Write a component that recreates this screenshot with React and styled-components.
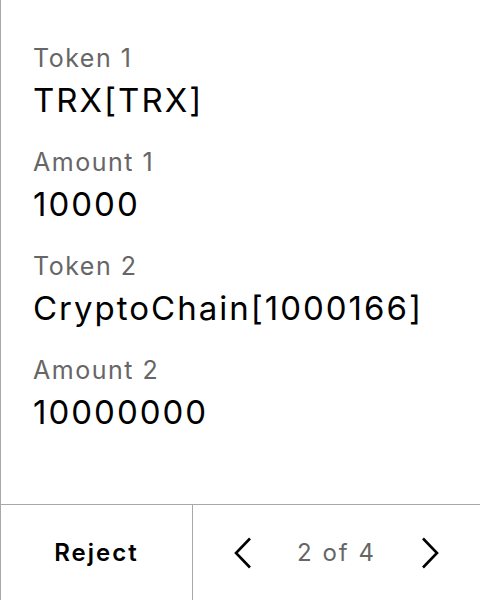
import React from 'react';
import styled, { createGlobalStyle } from 'styled-components';

const Global = createGlobalStyle`
  body {
    margin: 0;
    background: #fff;
    font-family: Inter, "Noto Sans", sans-serif;
  }
`;

const Screen = styled.div`
  width: 480px;
  height: 600px;
  box-sizing: border-box;
  border-left: 1px solid #a8a8a8;
  display: flex;
  flex-direction: column;
`;

const Details = styled.div`
  flex: 1;
  padding: 42px 0 0 32px;
  display: flex;
  flex-direction: column;
  gap: 26px;
`;

const Field = styled.div`
  display: flex;
  flex-direction: column;
`;

const Label = styled.div`
  font-size: 25px;
  line-height: 32px;
  letter-spacing: 1.5px;
  color: #666;
  margin-bottom: 6px;
`;

const Value = styled.div`
  font-size: 33px;
  line-height: 40px;
  letter-spacing: 2px;
  color: #000;
`;

const Footer = styled.div`
  height: 96px;
  box-sizing: border-box;
  border-top: 1px solid #a8a8a8;
  display: flex;
`;

const RejectButton = styled.button`
  width: 192px;
  border: none;
  border-right: 1px solid #a8a8a8;
  background: none;
  font-family: inherit;
  font-size: 24px;
  font-weight: 600;
  letter-spacing: 2px;
  color: #000;
  padding: 0;
`;

const Pager = styled.div`
  flex: 1;
  display: flex;
  align-items: center;
  justify-content: center;
  gap: 44px;
`;

const PageText = styled.span`
  font-size: 24px;
  letter-spacing: 2px;
  color: #666;
`;

const Arrow = styled.svg`
  width: 20px;
  height: 34px;
  display: block;
`;

const Chevron = ({ right }) => (
  <Arrow viewBox="0 0 20 34">
    <path
      d={right ? 'M3 2.5 L17 17 L3 31.5' : 'M17 2.5 L3 17 L17 31.5'}
      fill="none"
      stroke="#000"
      strokeWidth="2.6"
    />
  </Arrow>
);

const fields = [
  ['Token 1', 'TRX[TRX]'],
  ['Amount 1', '10000'],
  ['Token 2', 'CryptoChain[1000166]'],
  ['Amount 2', '10000000'],
];

export default function App() {
  return (
    <>
      <Global />
      <Screen>
        <Details>
          {fields.map(([label, value]) => (
            <Field key={label}>
              <Label>{label}</Label>
              <Value>{value}</Value>
            </Field>
          ))}
        </Details>
        <Footer>
          <RejectButton>Reject</RejectButton>
          <Pager>
            <Chevron />
            <PageText>2 of 4</PageText>
            <Chevron right />
          </Pager>
        </Footer>
      </Screen>
    </>
  );
}
